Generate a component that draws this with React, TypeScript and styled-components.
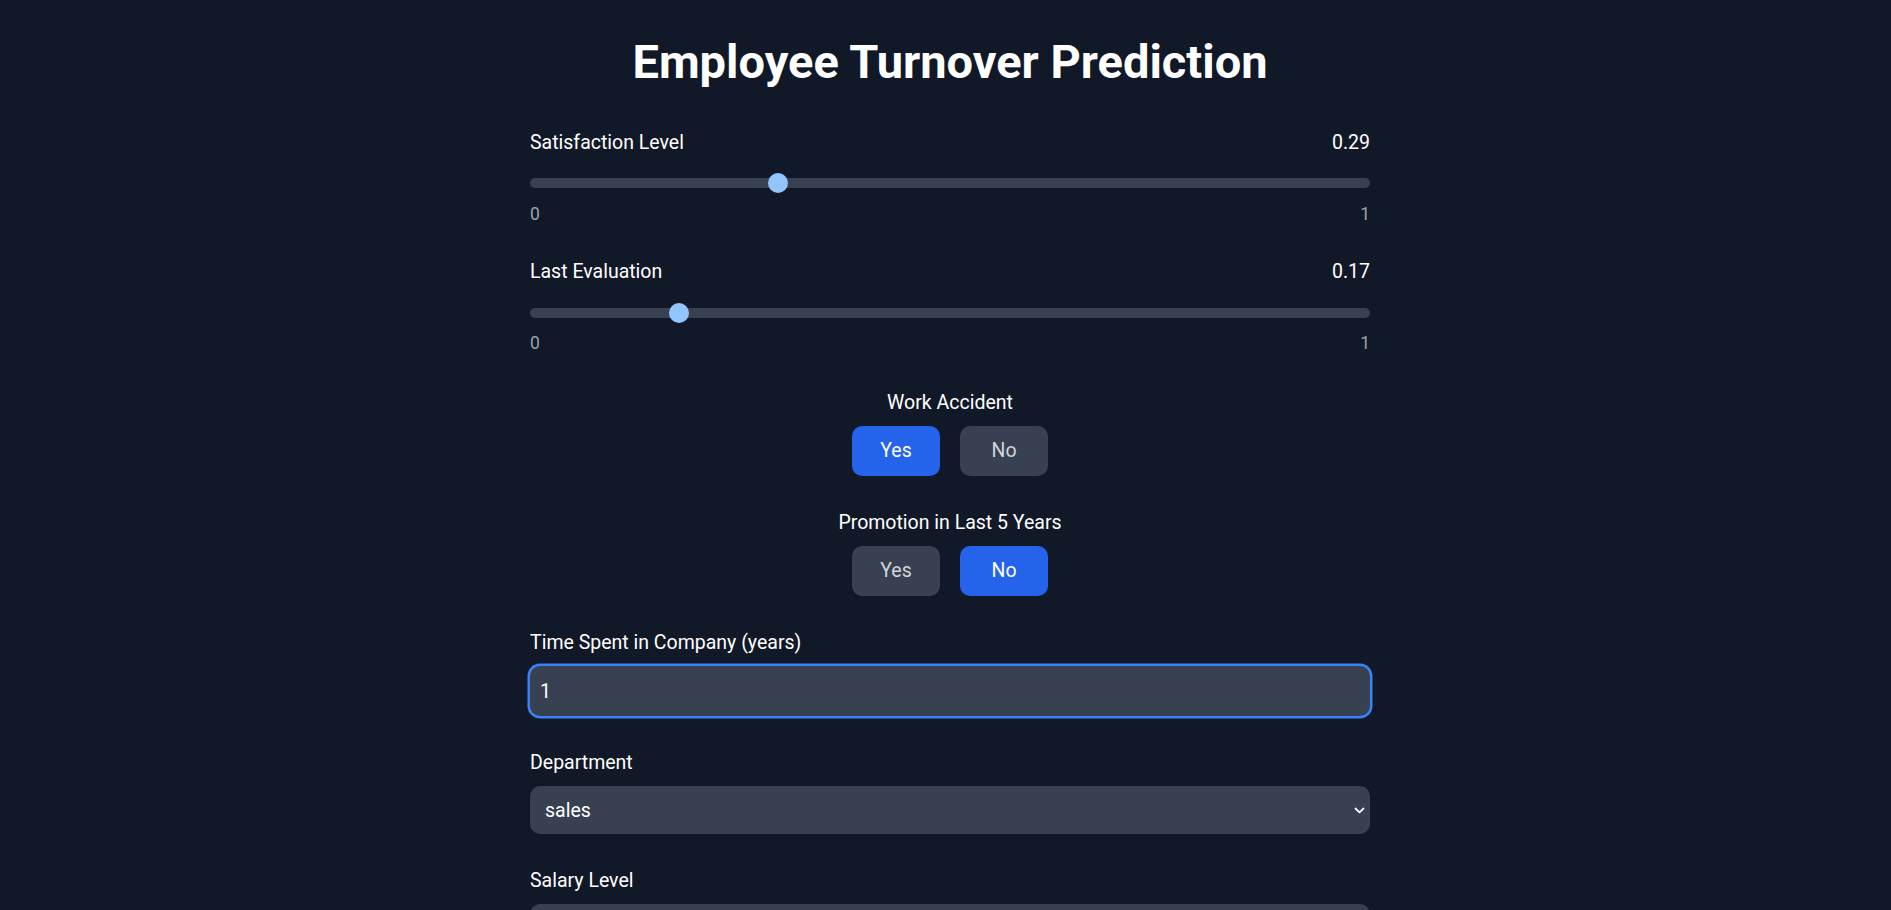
import React, { useState } from "react";
import styled, { createGlobalStyle } from "styled-components";

const GlobalStyle = createGlobalStyle`
  html, body {
    margin: 0;
    padding: 0;
    background: #111827;
  }
  body {
    font-family: Roboto, "Segoe UI", "Noto Sans", sans-serif;
    color: #ffffff;
  }
  * { box-sizing: border-box; }
`;

const Page = styled.div`
  min-height: 100vh;
  background: #111827;
  padding: 37px 0 60px 9px;
`;

const Container = styled.div`
  width: 840px;
  margin: 0 auto;
  display: flex;
  flex-direction: column;
  gap: 30px;
`;

const Title = styled.h1`
  margin: 0 0 10px;
  font-size: 47px;
  line-height: 50px;
  font-weight: 700;
  text-align: center;
  color: #ffffff;
`;

const Field = styled.div<{ $center?: boolean }>`
  display: flex;
  flex-direction: column;
  align-items: ${(p) => (p.$center ? "center" : "stretch")};
`;

const LabelRow = styled.div`
  display: flex;
  justify-content: space-between;
  align-items: center;
  padding-top: 1.5px;
  height: 30px;
  font-size: 19.5px;
  line-height: 30px;
`;

const Label = styled.label`
  display: block;
  height: 30px;
  padding-top: 1.5px;
  font-size: 19.5px;
  line-height: 30px;
  color: #ffffff;
  margin-bottom: 10px;
`;

const Value = styled.span`
  font-size: 19.5px;
  line-height: 30px;
`;

const Range = styled.input`
  -webkit-appearance: none;
  appearance: none;
  display: block;
  width: 100%;
  height: 10px;
  margin: 21px 0 0;
  padding: 0;
  background: #374151;
  border-radius: 10px;
  outline: none;
  cursor: pointer;
  &::-webkit-slider-thumb {
    -webkit-appearance: none;
    appearance: none;
    width: 20px;
    height: 20px;
    border-radius: 50%;
    background: #93c5fd;
    border: none;
  }
  &::-moz-range-thumb {
    width: 20px;
    height: 20px;
    border-radius: 50%;
    background: #93c5fd;
    border: none;
  }
`;

const MinMax = styled.div`
  display: flex;
  justify-content: space-between;
  margin-top: 13.5px;
  font-size: 17.5px;
  line-height: 25px;
  color: #9ca3af;
`;

const ButtonRow = styled.div`
  display: flex;
  gap: 20px;
  justify-content: center;
`;

const Toggle = styled.button<{ $active: boolean }>`
  min-width: 88px;
  height: 50px;
  padding: 0 20px;
  border: none;
  border-radius: 10px;
  font-family: inherit;
  font-size: 19.5px;
  line-height: 30px;
  cursor: pointer;
  background: ${(p) => (p.$active ? "#2563eb" : "#374151")};
  color: ${(p) => (p.$active ? "#ffffff" : "#d1d5db")};
`;

const TextInput = styled.input`
  display: block;
  width: 100%;
  height: 50px;
  padding: 0 10px;
  border: none;
  border-radius: 10px;
  background: #374151;
  color: #ffffff;
  font-family: inherit;
  font-size: 19.5px;
  caret-color: #ffffff;
  outline: none;
  box-shadow: 0 0 0 2.5px #3b82f6;
  -moz-appearance: textfield;
  &::-webkit-outer-spin-button,
  &::-webkit-inner-spin-button {
    -webkit-appearance: none;
    margin: 0;
  }
`;

const SelectWrap = styled.div`
  position: relative;
  width: 100%;
`;

const Select = styled.select`
  display: block;
  width: 100%;
  height: 48px;
  padding: 0 30px 0 15px;
  border: none;
  border-radius: 10px;
  background: #374151;
  color: #ffffff;
  font-family: inherit;
  font-size: 19.5px;
  -webkit-appearance: none;
  appearance: none;
  outline: none;
`;

const Chevron = styled.svg`
  position: absolute;
  right: 5px;
  top: 50%;
  margin-top: -3px;
  width: 11px;
  height: 7px;
  pointer-events: none;
`;

const PredictButton = styled.button`
  width: 100%;
  height: 50px;
  border: none;
  border-radius: 10px;
  background: #2563eb;
  color: #ffffff;
  font-family: inherit;
  font-size: 19.5px;
`;

type SliderProps = {
  label: string;
  value: number;
  onChange: (v: number) => void;
};

function SliderField({ label, value, onChange }: SliderProps) {
  return (
    <Field>
      <LabelRow>
        <span>{label}</span>
        <Value>{value.toFixed(2)}</Value>
      </LabelRow>
      <Range
        type="range"
        min={0}
        max={1}
        step={0.01}
        value={value}
        onChange={(e) => onChange(parseFloat(e.target.value))}
      />
      <MinMax>
        <span>0</span>
        <span>1</span>
      </MinMax>
    </Field>
  );
}

type ToggleProps = {
  label: string;
  value: boolean;
  onChange: (v: boolean) => void;
};

function ToggleField({ label, value, onChange }: ToggleProps) {
  return (
    <Field $center>
      <Label as="div">{label}</Label>
      <ButtonRow>
        <Toggle $active={value} onClick={() => onChange(true)}>
          Yes
        </Toggle>
        <Toggle $active={!value} onClick={() => onChange(false)}>
          No
        </Toggle>
      </ButtonRow>
    </Field>
  );
}

function SelectField({
  label,
  value,
  options,
  onChange,
}: {
  label: string;
  value: string;
  options: string[];
  onChange: (v: string) => void;
}) {
  return (
    <Field>
      <Label>{label}</Label>
      <SelectWrap>
        <Select value={value} onChange={(e) => onChange(e.target.value)}>
          {options.map((o) => (
            <option key={o} value={o}>
              {o}
            </option>
          ))}
        </Select>
        <Chevron viewBox="0 0 11 7" fill="none">
          <polyline
            points="1.5,1.5 5.5,5.3 9.5,1.5"
            stroke="#ffffff"
            strokeWidth="1.8"
            strokeLinecap="round"
            strokeLinejoin="round"
          />
        </Chevron>
      </SelectWrap>
    </Field>
  );
}

export default function App() {
  const [satisfaction, setSatisfaction] = useState(0.29);
  const [evaluation, setEvaluation] = useState(0.17);
  const [accident, setAccident] = useState(true);
  const [promotion, setPromotion] = useState(false);
  const [years, setYears] = useState("1");
  const [department, setDepartment] = useState("sales");
  const [salary, setSalary] = useState("low");

  return (
    <>
      <GlobalStyle />
      <Page>
        <Container>
          <Title>Employee Turnover Prediction</Title>
          <SliderField
            label="Satisfaction Level"
            value={satisfaction}
            onChange={setSatisfaction}
          />
          <SliderField
            label="Last Evaluation"
            value={evaluation}
            onChange={setEvaluation}
          />
          <ToggleField
            label="Work Accident"
            value={accident}
            onChange={setAccident}
          />
          <ToggleField
            label="Promotion in Last 5 Years"
            value={promotion}
            onChange={setPromotion}
          />
          <Field>
            <Label htmlFor="years">Time Spent in Company (years)</Label>
            <TextInput
              id="years"
              type="number"
              autoFocus
              value={years}
              onChange={(e) => setYears(e.target.value)}
            />
          </Field>
          <SelectField
            label="Department"
            value={department}
            options={[
              "sales",
              "accounting",
              "hr",
              "technical",
              "support",
              "management",
              "IT",
              "product_mng",
              "marketing",
              "RandD",
            ]}
            onChange={setDepartment}
          />
          <SelectField
            label="Salary Level"
            value={salary}
            options={["low", "medium", "high"]}
            onChange={setSalary}
          />
          <PredictButton>Predict</PredictButton>
        </Container>
      </Page>
    </>
  );
}
